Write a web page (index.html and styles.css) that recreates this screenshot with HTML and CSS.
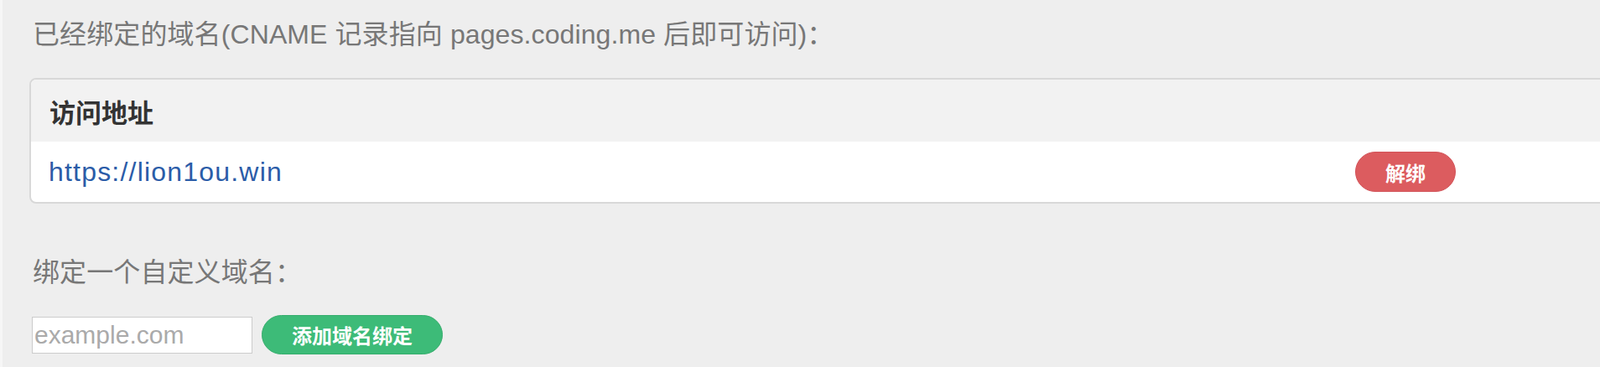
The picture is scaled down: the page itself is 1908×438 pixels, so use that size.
FILE: index.html
```html
<!DOCTYPE html>
<html lang="zh-CN">
<head>
    <meta charset="UTF-8">
    <meta name="viewport" content="width=device-width, initial-scale=1.0">
    <link rel="stylesheet" href="styles.css">
</head>
<body>
    <div class="page">
        <p class="section-title">已经绑定的域名(CNAME 记录指向 pages.coding.me 后即可访问)：</p>

        <div class="domain-card">
            <div class="domain-head">访问地址</div>
            <div class="domain-row">
                <a class="domain-link" href="#">https://lion1ou.win</a>
                <button class="btn btn-danger">解绑</button>
            </div>
        </div>

        <p class="section-title section-add">绑定一个自定义域名：</p>

        <div class="bind-form">
            <input type="text" placeholder="example.com" />
            <button class="btn btn-success">添加域名绑定</button>
        </div>
    </div>
</body>
</html>
```

FILE: styles.css
```css
:root {
    --page-bg: #eeeeee;
    --head-bg: #f2f2f2;
    --border: #d8d8d8;
    --muted: #777777;
    --link: #2b5ca8;
    --danger: #dc5c5f;
    --success: #3dbb78;
}

* {
    margin: 0;
    padding: 0;
    box-sizing: border-box;
}

html, body {
    height: 100%;
    overflow: hidden;
}

body {
    background: var(--page-bg);
    border-left: 3px solid #f6f6f6;
    font-family: 'Liberation Sans', 'Noto Sans CJK SC', sans-serif;
    color: #333;
}

.page {
    padding-left: 32px;
}

.section-title {
    margin-top: 21px;
    padding-left: 4px;
    font-size: 32px;
    line-height: 40px;
    letter-spacing: 0.1px;
    color: var(--muted);
}

.section-add {
    margin-top: 62px;
}

/* bound domains table */
.domain-card {
    margin-top: 32px;
    width: 1920px;
    border: 2px solid var(--border);
    border-radius: 8px;
    background: #fff;
    overflow: hidden;
}

.domain-head {
    height: 74px;
    display: flex;
    align-items: center;
    padding-left: 22px;
    background: var(--head-bg);
    font-size: 31px;
    font-weight: bold;
    color: #333;
}

.domain-row {
    height: 72px;
    display: grid;
    grid-template-columns: 1558px auto;
    align-items: center;
    padding-left: 21px;
}

.domain-link {
    font-size: 32px;
    letter-spacing: 1.2px;
    color: var(--link);
    text-decoration: none;
}

.btn {
    font-family: 'Noto Sans CJK SC', sans-serif;
    font-size: 24px;
    font-weight: bold;
    color: #fff;
    border-radius: 24px;
    cursor: pointer;
}

.btn-danger {
    width: 120px;
    height: 48px;
    background: var(--danger);
    border: 1px solid #d3545a;
}

.btn-success {
    width: 216px;
    height: 47px;
    background: var(--success);
    border: 1px solid #35ad6c;
}

/* add domain form */
.bind-form {
    margin-top: 31px;
    padding-left: 3px;
    display: flex;
    align-items: center;
    gap: 11px;
}

.bind-form input {
    width: 263px;
    height: 44px;
    padding: 0 2px;
    border: 1px solid #cccccc;
    background: #fff;
    font-family: 'Liberation Sans', sans-serif;
    font-size: 30px;
    color: #333;
    outline: none;
}

.bind-form input::placeholder {
    color: #aaaaaa;
}
```
